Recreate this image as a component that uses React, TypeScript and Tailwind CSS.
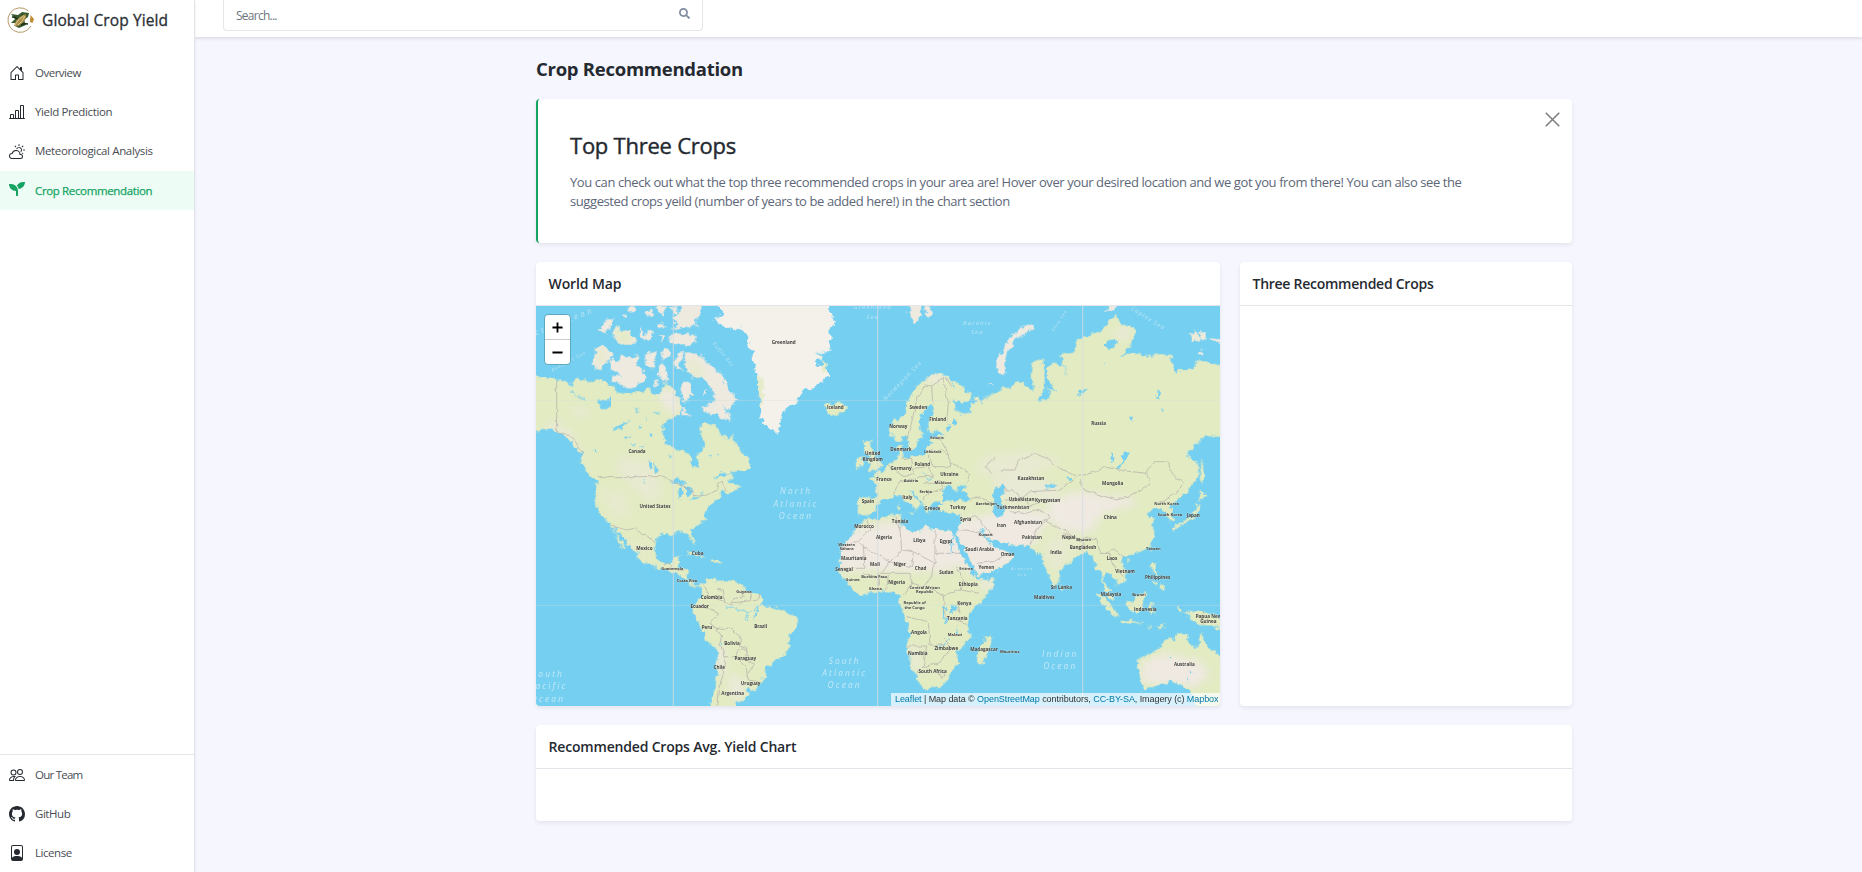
import React from "react";
import {
  BsHouseDoor,
  BsBarChartLine,
  BsCloudSun,
  BsPeople,
  BsGithub,
  BsFilePerson,
} from "react-icons/bs";
import { FaSeedling, FaSearch } from "react-icons/fa";

/* Coastlines, in map units (three per pixel). */
const AMERICAS =
  "M10 228 40 232 75 235 95 240 118 252 140 240 172 235 178 248 200 240 235 250 260 268 262 278 300 280 340 272 352 262 375 285 395 275 400 245 425 262 440 285 452 300 455 330 450 345 420 355 400 375 398 405 410 435 440 445 455 455 480 470 490 500 505 503 508 480 500 465 520 450 522 425 512 400 513 370 540 370 560 382 575 405 595 425 605 400 622 440 640 460 662 490 655 505 620 515 570 520 545 535 575 530 600 518 612 530 592 545 610 555 632 560 600 578 585 580 580 570 563 598 545 612 530 625 525 660 500 675 482 692 490 720 497 735 488 730 478 705 455 698 430 700 425 705 400 700 380 715 375 740 378 775 400 790 425 785 430 770 452 768 445 790 440 805 475 812 472 835 485 850 497 858 515 852 530 840 552 835 560 842 600 842 625 850 650 870 690 880 702 905 690 915 715 918 740 925 780 940 803 952 804 975 780 1005 778 1040 765 1070 735 1080 710 1100 705 1130 685 1160 665 1170 650 1160 655 1185 640 1203 620 1205 618 1240 545 1240 545 1190 555 1180 560 1130 565 1070 560 1045 530 1025 515 985 492 945 490 915 500 905 515 890 518 870 512 860 492 863 465 840 440 822 415 810 390 806 350 790 327 780 320 760 300 740 285 720 262 690 250 682 262 710 280 730 295 752 275 740 262 722 255 700 245 678 230 665 210 640 197 615 195 590 200 540 185 530 170 510 150 480 155 460 130 440 110 410 80 395 60 385 35 390 -10 402 -10 228Z";

const EURASIA =
  "M1080 375 1120 345 1130 310 1155 265 1180 240 1215 220 1250 225 1252 240 1290 250 1325 285 1320 303 1290 308 1268 300 1275 325 1300 345 1325 335 1320 318 1335 310 1332 290 1345 288 1350 305 1380 285 1400 270 1420 265 1445 262 1458 250 1455 240 1480 250 1500 268 1510 272 1512 250 1503 225 1510 190 1520 175 1540 180 1540 210 1545 250 1540 280 1520 302 1550 300 1560 285 1550 260 1580 280 1565 255 1550 230 1550 205 1570 190 1600 195 1610 235 1605 205 1595 175 1595 160 1635 155 1640 125 1660 108 1720 90 1735 65 1755 48 1770 60 1775 75 1800 75 1818 95 1810 120 1795 145 1770 175 1800 155 1820 160 1860 170 1890 160 1922 165 1925 190 1940 222 1955 205 1990 208 2000 180 2040 190 2110 202 2110 405 2020 410 2000 430 1970 465 1990 478 2005 490 2005 530 1990 555 1960 585 1935 605 1920 622 1927 640 1928 660 1915 665 1908 640 1890 628 1870 625 1850 645 1875 655 1866 672 1876 700 1865 730 1840 750 1800 765 1780 770 1770 782 1790 815 1785 840 1760 855 1758 840 1735 825 1724 815 1722 840 1735 865 1755 903 1738 895 1718 860 1715 815 1700 805 1685 770 1672 755 1650 765 1625 780 1590 810 1590 840 1575 858 1560 840 1540 790 1538 765 1520 765 1500 740 1460 735 1410 725 1385 718 1360 695 1350 680 1350 695 1375 725 1392 742 1418 750 1450 765 1435 790 1400 810 1340 830 1335 800 1310 760 1285 710 1280 695 1290 675 1290 645 1260 638 1230 635 1225 617 1240 608 1215 606 1205 612 1200 632 1190 640 1180 615 1165 598 1148 572 1138 572 1160 600 1178 620 1165 620 1158 635 1150 618 1120 600 1108 586 1085 592 1065 595 1045 610 1035 635 1015 648 983 640 985 590 1035 595 1040 580 1035 550 1015 535 1040 530 1035 515 1060 512 1075 495 1090 480 1105 470 1105 435 1120 435 1115 450 1120 475 1145 470 1190 462 1190 440 1210 430 1200 425 1205 408 1245 403 1235 397 1195 395 1192 370 1210 345 1215 320 1195 315 1180 335 1165 370 1170 390 1180 400 1165 420 1158 445 1140 450 1135 430 1130 405 1115 415 1095 425 1080 400Z";

const AFRICA =
  "M985 675 1010 655 1045 658 1085 645 1110 642 1115 655 1110 675 1130 690 1160 700 1180 680 1210 685 1250 695 1270 698 1280 730 1290 760 1310 790 1330 825 1340 838 1392 835 1385 865 1355 900 1320 935 1312 965 1320 1020 1280 1055 1285 1090 1265 1110 1255 1140 1230 1160 1180 1168 1168 1150 1145 1100 1128 1040 1140 1000 1130 960 1110 920 1110 890 1090 875 1070 870 1020 880 990 885 965 865 940 835 928 810 932 775 930 750 950 720 970 700Z M1380 1002 1387 1020 1360 1090 1345 1095 1342 1060 1355 1030Z";

const AUSTRALASIA =
  "M1825 1075 1875 1055 1910 1015 1935 1018 1940 1000 1975 1005 1970 1025 1995 1045 2005 1030 2015 992 2030 1040 2060 1060 2110 1095 2110 1250 2010 1250 1985 1178 1965 1165 1960 1155 1920 1145 1880 1160 1840 1170 1822 1100Z M1940 922 1962 922 1955 942 1985 932 2020 935 2110 965 2110 995 2045 978 2000 970 1980 950 1950 938Z M1788 910 1810 900 1840 875 1852 880 1840 910 1840 930 1820 935 1795 930Z M1695 878 1720 890 1750 925 1768 950 1755 952 1720 915Z M1768 958 1820 965 1845 972 1780 970Z M1852 915 1880 908 1862 920 1880 950 1865 935 1858 950Z M1865 790 1878 790 1875 815 1885 832 1870 822 1862 805Z M1890 860 1905 852 1902 875 1885 868Z M1870 838 1880 845 1885 855 1872 848Z M1850 978 1865 976 1860 984Z M1880 978 1910 972 1890 985Z M1865 738 1868 758 1860 750Z M1790 780 1800 778 1794 788Z M1590 855 1600 862 1594 875Z";

const ISLES =
  "M2008 608 2005 640 1980 662 1950 678 1935 690 1930 680 1965 660 1990 645 1995 620Z M2010 568 2030 590 2005 600Z M2015 475 2025 520 2015 555 2010 520Z M1000 425 1025 420 1020 440 1045 480 1055 495 1040 510 1008 515 1025 500 1010 490 1020 470 1005 450Z M980 475 1000 468 998 500 975 502Z M880 315 895 308 905 318 930 305 945 315 947 330 925 348 905 345 890 335 895 325Z M1115 465 1122 468 1116 474Z M468 757 485 754 510 765 530 775 500 768Z M548 778 580 784 565 790 545 787Z M1132 634 1152 636 1145 644Z M1105 612 1112 612 1110 628 1104 626Z";

const GREENLAND =
  "M548 -10 580 45 550 60 570 75 610 88 635 85 650 110 665 150 670 190 680 225 695 235 690 290 690 330 700 370 715 385 730 390 745 402 750 370 760 340 775 318 795 308 815 285 820 270 850 265 880 240 894 227 894 205 865 200 855 185 880 170 855 160 885 155 905 150 898 130 903 110 895 100 900 85 918 75 915 60 897 40 900 -10Z";

const ARCTIC =
  "M200 140 225 138 252 165 240 175 225 190 208 212 188 190Z M235 185 250 178 265 185 275 165 295 175 325 165 320 200 340 215 350 235 330 250 320 262 290 265 265 250 250 245 245 230 270 225 245 205Z M345 165 380 150 378 180 365 208 348 190Z M465 155 515 165 530 190 555 205 580 235 590 265 622 297 605 315 600 330 575 320 600 345 600 365 560 345 520 335 515 320 540 315 560 300 545 265 525 240 515 230 490 235 470 215 465 195Z M395 150 425 150 420 170 400 182Z M385 205 400 190 412 220 415 245 388 238Z M450 153 462 158 445 200 458 212 434 202 436 170Z M455 320 490 350 462 342Z M462 240 482 250 485 285 465 308 452 280Z M420 90 440 80 430 55 450 40 455 10 512 10 510 45 495 60 505 78 460 82Z M415 105 440 100 495 105 500 125 475 135 420 130Z M207 92 228 60 252 52 240 80 225 100Z M242 102 268 75 275 95 300 88 305 110 322 115 312 135 270 132Z M330 80 345 105 360 90 372 110 345 120 330 105Z M290 22 310 18 318 35 300 38Z M270 45 290 42 288 52Z M345 35 365 25 372 48 352 52Z M382 70 402 68 405 85 385 82Z M385 110 402 108 400 125Z M378 18 410 20 400 50 390 40Z M420 18 440 18 445 45 425 40Z M370 240 385 245 380 260Z M518 268 530 268 526 285Z M1510 70 1510 85 1455 120 1430 160 1425 195 1430 220 1410 222 1395 190 1420 150 1440 110 1470 85Z M1133 10 1170 10 1175 40 1155 75 1140 50Z M1190 10 1208 40 1195 55 1185 35Z M1728 35 1740 10 1765 10 1755 28Z M1980 100 1998 92 2010 120 1990 128Z M2008 96 2030 100 2026 118 2012 122Z M2005 155 2015 150 2020 165 2008 165Z M2040 115 2080 118 2080 130 2050 124Z M1375 250 1385 248 1386 260Z";

const LAKES =
  "M200 305 240 295 240 325 215 328 205 318Z M248 385 300 360 280 380 255 388Z M355 480 365 490 370 515 358 500Z M370 480 385 515 378 518Z M282 412 305 408 290 418Z M345 430 338 445 330 448Z M355 402 368 400 366 412Z M420 543 445 535 470 545 465 552 440 553 425 550Z M448 560 455 555 458 590 448 600 445 580Z M465 555 490 570 480 590 465 572Z M480 600 500 590 510 590 490 602Z M505 585 525 578 515 585Z M1398 560 1418 552 1426 575 1410 590 1414 610 1426 622 1414 650 1398 655 1385 635 1394 610 1390 585Z M1238 568 1255 560 1280 572 1285 560 1310 552 1295 572 1318 590 1316 602 1280 602 1240 605Z M1755 502 1775 492 1782 455 1796 455 1788 480 1768 505Z M1740 455 1746 455 1752 485 1746 485Z M1728 122 1755 120 1760 135 1735 148 1728 138Z M1640 272 1675 268 1648 284Z M1886 270 1892 268 1888 300 1884 290Z M1893 318 1902 332 1896 332Z M1795 350 1812 350 1806 370Z M1720 185 1728 188 1724 192Z M1250 375 1262 378 1258 398 1250 392Z M1270 358 1280 364 1276 378 1268 370Z M1265 248 1270 252 1266 262Z M1540 558 1580 552 1582 560 1545 566Z M1615 530 1622 540 1612 542Z M1260 920 1268 912 1280 918 1275 935 1262 935Z M1243 920 1248 925 1244 950 1252 970 1246 975 1240 945Z M1280 980 1284 1000 1278 1010Z M555 838 560 845 556 852Z M568 1022 578 1028 572 1034Z M1858 768 1868 775 1862 780Z M1978 1115 1984 1115 1982 1125Z M1970 1138 1976 1136 1978 1150Z M1922 1070 1928 1070 1925 1075Z M310 325 330 332 318 335Z M345 350 352 352 350 362Z M325 380 338 376 330 390Z M160 310 178 318 170 315Z M365 335 395 340 380 343Z M305 435 318 430 312 440Z M415 465 425 463 420 472Z M535 470 545 468 540 476Z M190 445 205 458 198 460Z M340 540 350 545 345 548Z M560 460 568 458 564 468Z";

const BORDERS =
  "M80 245V395 M80 395 110 402 130 415 158 460 M203 530H395 L420 540 440 550 485 570 490 590 530 585 560 570 565 550 580 548 588 575 M245 678 290 690 315 685 335 705 350 702 375 732 M400 795 415 790 425 797 M440 812 470 808 M520 850 540 890 585 905 580 870 558 868 M585 905 605 912 612 895 640 890 635 870 M660 878 662 900 M690 880 685 900 610 908 M500 918 535 925 565 940 540 970 560 985 600 985 630 1010 632 1040 650 1045 652 1080 675 1090 650 1125 655 1140 685 1145 M560 985 575 1010 570 1030 585 1070 615 1070 625 1050 650 1050 M585 1070 580 1120 565 1170 560 1218 M615 1070 650 1100 650 1120 M1130 420 1150 345 1160 300 1185 255 1205 258 1208 310 M1205 258 1240 235 1255 310 1250 370 M1250 235 1265 260 M1115 475 1145 475 1150 520 1125 530 1090 510 1075 495 M1150 505 1195 500 1210 530 1170 530 1110 545 1090 580 M1195 465 1210 500 1240 500 1262 500 1258 470 1235 450 1190 455 M1210 410 1232 420 1260 470 M1262 490 1290 500 1320 525 1310 545 M1180 550 1230 545 1240 565 1195 580 1180 600 M1385 520 1365 500 1395 470 M1320 600 1350 590 1380 610 M1410 510 1455 510 1465 480 1515 460 1560 480 1590 505 1640 530 1590 570 1500 575 1470 600 1425 600 M1640 530 1700 515 1720 500 1780 512 1850 520 1860 550 1800 590 1760 600 1660 570 1650 540 M1850 520 1870 485 1910 485 1935 535 1960 545 1940 580 1890 610 M1425 570 1450 570 1500 620 1540 600 1590 600 M1440 635 1480 640 1530 630 1560 650 1520 690 1500 735 M1540 660 1580 680 1640 715 1700 715 1710 760 1740 760 1745 790 1780 830 M1600 700 1660 725 1665 750 M1730 760 1750 745 1780 770 M1290 660 1340 650 1380 700 M1288 690 1310 690 1350 700 M1340 790 1390 785 1420 770 M1010 660 1020 690 980 725 930 745 M985 725 1000 740 1080 785 1115 750 1110 690 1095 650 M1000 740 1005 805 935 805 M1115 750 1150 755 1215 790 1215 690 M1215 760H1290 M1150 755 1145 800 1080 785 1055 820 M1055 820 1140 820 1145 850 1180 860 1205 830 1210 790 M1075 825 1070 870 M1045 820 1045 875 M1000 820 1040 830 M1145 850 1120 885 M1180 860 1240 885 1290 870 1300 840 1280 800 M1240 885 1245 950 1310 970 M1130 950 1195 965 1200 1035 1240 1035 M1130 1038H1190 L1180 1100 1225 1090 1260 1050 1245 1010 M1290 870 1350 880 M1180 1100 1160 1120 M1225 1120 1240 1115 1245 1130 1230 1135Z M1285 910 1290 940 M2020 935V975";

const RIVERS =
  "M585 918 620 925 655 938 690 920 M655 938 645 962 M690 918 672 955 M120 275 165 300 M180 620 200 640 M1205 540 1180 520 M1230 1040 1260 1020 M1275 660 1262 762";

type Label = [string, number, number, number?];
const COUNTRIES: Label[] = [
  ["Greenland", 761, 131], ["Canada", 321, 459], ["United States", 375, 624], ["Iceland", 916, 328],
  ["Sweden", 1165, 328], ["Finland", 1223, 362], ["Norway", 1105, 384], ["Estonia", 1221, 418, 11],
  ["Denmark", 1113, 454], ["Lithuania", 1208, 460, 11], ["United", 1028, 466], ["Kingdom", 1028, 482],
  ["Germany", 1113, 510], ["Poland", 1177, 498], ["Ukraine", 1258, 529], ["France", 1062, 544],
  ["Austria", 1143, 547, 12], ["Moldova", 1239, 551, 12], ["Serbia", 1187, 580, 12], ["Italy", 1132, 597],
  ["Spain", 1014, 608], ["Greece", 1207, 631], ["Turkey", 1284, 627], ["Azerbaijan", 1369, 616, 12],
  ["Russia", 1706, 374], ["Kazakhstan", 1503, 541], ["Mongolia", 1748, 555], ["Uzbekistan", 1475, 603],
  ["Kyrgyzstan", 1553, 607], ["Turkmenistan", 1449, 627], ["North Korea", 1910, 616, 12],
  ["South Korea", 1920, 649, 12], ["Japan", 1990, 650], ["China", 1741, 658], ["Afghanistan", 1494, 672],
  ["Pakistan", 1506, 717], ["Nepal", 1616, 716], ["Bhutan", 1661, 723, 12], ["Bangladesh", 1659, 746],
  ["India", 1578, 762], ["Laos", 1746, 779], ["Taiwan", 1870, 751, 12], ["Vietnam", 1785, 818],
  ["Philippines", 1883, 837], ["Sri Lanka", 1594, 866], ["Maldives", 1543, 896], ["Malaysia", 1743, 887],
  ["Brunei", 1827, 887, 12], ["Indonesia", 1846, 933], ["Papua New", 2036, 953], ["Guinea", 2035, 969],
  ["Australia", 1963, 1099], ["Mauritius", 1439, 1059, 12], ["Madagascar", 1362, 1053], ["Syria", 1307, 662],
  ["Iran", 1414, 682], ["Kuwait", 1367, 708, 12], ["Saudi Arabia", 1349, 753], ["Oman", 1433, 767],
  ["Yemen", 1369, 807], ["Eritrea", 1308, 809, 12], ["Tunisia", 1110, 669], ["Morocco", 1002, 684],
  ["Algeria", 1062, 717], ["Libya", 1168, 726], ["Egypt", 1248, 730], ["Western", 950, 737, 12],
  ["Sahara", 950, 750, 12], ["Mauritania", 971, 780], ["Mali", 1035, 797], ["Niger", 1109, 797],
  ["Chad", 1172, 811], ["Sudan", 1249, 821], ["Senegal", 942, 813], ["Guinea", 968, 843, 12],
  ["Burkina Faso", 1033, 834, 12], ["Ghana", 1036, 870, 12], ["Nigeria", 1100, 851], ["Central African", 1184, 866, 12],
  ["Republic", 1184, 879, 12], ["Ethiopia", 1315, 859], ["Republic of", 1154, 913, 12], ["the Congo", 1154, 926, 12],
  ["Kenya", 1303, 915], ["Tanzania", 1282, 960], ["Angola", 1167, 1001], ["Malawi", 1275, 1009, 12],
  ["Zimbabwe", 1249, 1051], ["Namibia", 1163, 1065], ["South Africa", 1208, 1120], ["Mexico", 343, 749],
  ["Cuba", 503, 765], ["Guatemala", 427, 810, 12], ["Costa Rica", 471, 847, 12], ["Guyana", 642, 880, 12],
  ["Colombia", 545, 897], ["Ecuador", 509, 925], ["Peru", 531, 986], ["Brazil", 692, 983], ["Bolivia", 606, 1035],
  ["Paraguay", 646, 1081], ["Chile", 568, 1107], ["Uruguay", 662, 1155], ["Argentina", 608, 1184],
];

const OCEANS: Label[] = [
  ["North", 798, 583, 25], ["Atlantic", 798, 620, 25], ["Ocean", 798, 658, 25],
  ["South", 944, 1091, 25], ["Atlantic", 944, 1128, 25], ["Ocean", 944, 1165, 25],
  ["Indian", 1591, 1070, 25], ["Ocean", 1591, 1107, 25],
  ["South", 54, 1130, 25], ["Pacific", 54, 1168, 25], ["Ocean", 54, 1206, 25],
];

const SEAS: Label[] = [
  ["Greenland", 1028, 28, 18], ["Sea", 1028, 56, 18], ["Barents", 1342, 74, 18], ["Sea", 1342, 102, 18],
  ["Arabian", 1477, 811, 12], ["Sea", 1477, 829, 12],
];

const LANDS = [AMERICAS, EURASIA, AFRICA, AUSTRALASIA, ISLES, ARCTIC, GREENLAND];

function WorldMap() {
  return (
    <svg viewBox="18 18 2052 1200" className="block h-[400px] w-[684px]" role="img" aria-label="World map">
      <defs>
        <filter id="soft" x="-20%" y="-20%" width="140%" height="140%">
          <feGaussianBlur stdDeviation="12" />
        </filter>
        <filter id="coast" x="-60" y="-60" width="2260" height="1400" filterUnits="userSpaceOnUse" primitiveUnits="userSpaceOnUse">
          <feTurbulence type="fractalNoise" baseFrequency="0.06" numOctaves="3" seed="7" result="n" />
          <feDisplacementMap in="SourceGraphic" in2="n" scale="22" xChannelSelector="R" yChannelSelector="G" />
        </filter>
        <filter id="lines" x="-60" y="-60" width="2260" height="1400" filterUnits="userSpaceOnUse" primitiveUnits="userSpaceOnUse">
          <feTurbulence type="fractalNoise" baseFrequency="0.05" numOctaves="2" seed="7" result="n" />
          <feDisplacementMap in="SourceGraphic" in2="n" scale="12" xChannelSelector="R" yChannelSelector="G" />
        </filter>
        <clipPath id="land">
          {LANDS.map((d, i) => (
            <path key={i} d={d} />
          ))}
        </clipPath>
      </defs>
      <rect x="0" y="0" width="2100" height="1240" fill="#75cff0" />
      <g filter="url(#coast)">
        <g fill="#e2ebc2">
          <path d={AMERICAS} />
          <path d={EURASIA} />
          <path d={AFRICA} />
          <path d={AUSTRALASIA} />
          <path d={ISLES} />
        </g>
        <path d={ARCTIC} fill="#efeae0" />
        <g clipPath="url(#land)">
          <g filter="url(#soft)" fill="#efe9e2">
            <path d="M900 700 1000 680 1120 660 1280 680 1340 820 1280 800 1240 815 920 812Z" />
            <path d="M1270 660 1350 650 1440 620 1560 640 1520 720 1440 800 1340 830Z" />
            <path d="M1560 600 1650 575 1800 595 1830 610 1720 640 1680 700 1600 695 1550 650Z" />
            <path d="M1380 535 1460 520 1600 560 1560 600 1420 600Z" opacity="0.6" />
            <path d="M1830 1090 1900 1060 2010 1080 2040 1130 1990 1160 1840 1150Z" />
            <path d="M380 265 440 270 450 340 410 330Z" />
            <path d="M590 1120 650 1140 640 1200 600 1190Z" opacity="0.7" />
            <path d="M560 1040 585 1050 580 1120 562 1120Z" />
            <path d="M130 320 180 330 170 350 130 345Z" opacity="0.7" />
            <path d="M260 470 350 480 400 560 370 620 260 520Z" opacity="0.5" />
            <path d="M210 560 290 580 300 660 240 640Z" opacity="0.4" />
            <path d="M1360 470 1480 450 1600 480 1500 530 1330 520Z" opacity="0.5" />
            <path d="M60 360 120 385 170 500 130 440 50 385Z" opacity="0.6" />
            <path d="M1750 90 1800 80 1800 110 1760 125Z" opacity="0.7" />
            <path d="M1135 1040 1165 1045 1175 1110 1150 1110Z" opacity="0.7" />
            <path d="M1350 840 1395 835 1370 880Z" />
            <path d="M1560 700 1640 730 1580 830 1540 760Z" opacity="0.45" />
            <path d="M1190 220 1260 225 1240 240 1190 250Z" />
            <path d="M290 720 350 735 350 780 310 740Z" opacity="0.4" />
          </g>
          <g filter="url(#soft)" fill="#e2ebc2">
            <path d="M470 170 500 190 530 240 490 220Z" />
            <path d="M200 150 225 150 225 180 205 200Z" />
            <path d="M250 80 300 90 310 130 260 130Z" />
            <path d="M1985 95 2000 95 2000 125 1985 125Z" />
          </g>
        </g>
        <path d={GREENLAND} fill="#f4f1eb" />
        <path d="M680 225 700 235 702 290 690 320 688 280Z M870 165 892 205 885 225 876 200Z" fill="#e6ecc9" />
        <path d={LAKES} fill="#75cff0" />
        <path d={RIVERS} fill="none" stroke="#75cff0" strokeWidth="3" />
      </g>
      <path d={BORDERS} filter="url(#lines)" fill="none" stroke="#b3adaa" strokeOpacity="0.8" strokeWidth="2.6" strokeLinejoin="round" />
      <g fill="none">
        <path d="M430 0V1240M1043 0V1240M1658 0V1240" stroke="#d5dde0" strokeOpacity="0.75" strokeWidth="3.4" />
        <path d="M0 301H2100M0 916H2100" stroke="#d5dde0" strokeOpacity="0.35" strokeWidth="3" />
      </g>
      <g className="font-['Open_Sans',sans-serif] italic" fill="#c3e9f8" textAnchor="middle">
        {OCEANS.map(([t, x, y, s], i) => (
          <text key={i} x={x} y={y} fontSize={s} letterSpacing="6.5">{t}</text>
        ))}
        {SEAS.map(([t, x, y, s], i) => (
          <text key={i} x={x} y={y} fontSize={s} letterSpacing="3.5" fillOpacity="0.85">{t}</text>
        ))}
        <g fontSize="18" letterSpacing="3" fillOpacity="0.85">
          <text transform="translate(1122 246) rotate(-46)">Norwegian Sea</text>
          <text transform="translate(1852 60) rotate(32)">Laptev Sea</text>
          <text transform="translate(1592 64) rotate(-56)" fontSize="13">Kara Sea</text>
          <text transform="translate(577 166) rotate(50)" fontSize="14">Baffin Bay</text>
          <text transform="translate(118 188) rotate(-28)" fontSize="14">Beaufort Sea</text>
          <text transform="translate(88 78) rotate(-22)" fontSize="24" letterSpacing="8">Arctic Ocean</text>
        </g>
      </g>
      <g
        className="font-['Open_Sans',sans-serif] font-bold"
        fill="#3f3f3f"
        stroke="#f3f2e4"
        strokeWidth="2"
        strokeOpacity="0.45"
        paintOrder="stroke"
        textAnchor="middle"
      >
        {COUNTRIES.map(([t, x, y, s], i) => (
          <text key={i} x={x} y={y} fontSize={s ?? 13.8}>{t}</text>
        ))}
      </g>
    </svg>
  );
}

function Logo() {
  return (
    <svg viewBox="0 0 28 28" className="h-7 w-7 shrink-0">
      <path d="M22.5 5A12.3 12.3 0 1 0 25 20" fill="none" stroke="#b59a6a" strokeWidth="1" />
      <path d="M5 8 12 9 16 6 23 7 22 11 18 14 20 19 13 22 9 20 11 17 5 17 9 13Z" fill="#3c5a2c" />
      <path d="M8 20Q10 11 20 8Q21 16 12 20Z" fill="#a98f4c" />
      <path d="M9 19Q12 13 18 9.500M12 19Q17 15 19 10" fill="none" stroke="#e2c987" strokeWidth="1" />
      <path d="M6 11Q9 11 12 13M15 19Q18 17 22 18" fill="none" stroke="#1f331b" strokeWidth="1.500" />
      <path d="M24.500 9 28 13 26.500 17 24 16Z" fill="#c08a2e" />
    </svg>
  );
}

type NavProps = { icon: React.ReactNode; label: string; active?: boolean; className?: string };

function NavItem({ icon, label, active, className = "" }: NavProps) {
  return (
    <a
      className={
        "flex h-[39px] items-center gap-[10px] pl-[9px] text-[11.500px] " +
        (active ? "bg-[#edfdf6] text-[#15a362] [-webkit-text-stroke:0.25px] " : "text-[#484d54] ") +
        className
      }
    >
      <span className={"text-[16px] [-webkit-text-stroke:0] " + (active ? "-mt-1 text-[#15a362]" : "text-[#252930]")}>{icon}</span>
      <span className="whitespace-nowrap">{label}</span>
    </a>
  );
}

function Card({ title, tracking, className = "", children }: { title: string; tracking: string; className?: string; children?: React.ReactNode }) {
  return (
    <section className={"overflow-hidden rounded-[4px] bg-white shadow-[0_2px_4px_rgba(0,0,0,0.08)] " + className}>
      <h4 className={"flex h-11 items-center whitespace-nowrap border-b border-[#e4e5ea] pl-[12.500px] text-[14px] font-semibold text-[#252930] " + tracking}>
        {title}
      </h4>
      {children}
    </section>
  );
}

export default function App() {
  return (
    <div className="flex h-[872px] w-full overflow-hidden bg-[#f5f6fe] font-['Open_Sans','Noto_Sans',sans-serif]">
      <aside className="z-10 flex w-[195px] shrink-0 flex-col border-r border-[#e1e3e8] bg-white shadow-[0_2px_4px_rgba(0,0,0,0.06)]">
        <div className="flex h-[54px] items-start gap-[8px] pl-[6px] pt-[6px]">
          <Logo />
          <span className="whitespace-nowrap text-[15.500px] leading-[28px] tracking-[0.120px] text-[#2b2f36] [-webkit-text-stroke:0.3px]">Global Crop Yield</span>
        </div>
        <nav>
          <NavItem icon={<BsHouseDoor />} label="Overview" className="pb-[2px] tracking-[-0.5px]" />
          <NavItem icon={<BsBarChartLine />} label="Yield Prediction" className="pb-[2px] tracking-[-0.38px]" />
          <NavItem icon={<BsCloudSun />} label="Meteorological Analysis" className="pb-[2px] tracking-[-0.36px]" />
          <NavItem icon={<FaSeedling />} label="Crop Recommendation" active className="tracking-[-0.36px]" />
        </nav>
        <div className="mt-auto border-t border-[#e4e5ea]">
          <NavItem icon={<BsPeople />} label="Our Team" className="tracking-[-0.75px]" />
          <NavItem icon={<BsGithub />} label="GitHub" className="tracking-[-0.45px]" />
          <NavItem icon={<BsFilePerson />} label="License" className="tracking-[-0.45px]" />
        </div>
      </aside>

      <div className="flex min-w-0 flex-1 flex-col">
        <header className="h-[37px] shrink-0 bg-white pl-7 shadow-[0_2px_3px_rgba(0,0,0,0.1)]">
          <div className="flex h-[31px] w-[480px] items-center justify-between rounded-b-[4px] border border-t-0 border-[#e4e6ea] pl-[12px] pr-[12px]">
            <span className="mt-[2px] text-[12px] tracking-[-0.75px] text-[#6c757d]">Search...</span>
            <FaSearch className="mb-1 h-[11px] w-[11px] text-[#828d9f]" />
          </div>
        </header>

        <main className="ml-[341px] w-[1036px]">
          <h1 className="mt-[18px] h-[44px] whitespace-nowrap text-[18.500px] font-bold leading-[27px] tracking-[-0.260px] text-[#252930]">Crop Recommendation</h1>

          <section className="flex h-[144px] items-start justify-between rounded-[4px] border-l-2 border-[#15a362] bg-white shadow-[0_2px_4px_rgba(0,0,0,0.08)]">
            <div className="pl-8 pt-[29px]">
              <h3 className="whitespace-nowrap text-[22px] leading-[34px] tracking-[-0.240px] text-[#252930] [-webkit-text-stroke:0.4px]">Top Three Crops</h3>
              <p className="mt-[11px] whitespace-nowrap text-[13px] leading-[19px] tracking-[-0.410px] text-[#5d6778]">
                You can check out what the top three recommended crops in your area are! Hover over your desired location and we got you from there! You can also see the
                <br />
                suggested crops yeild (number of years to be added here!) in the chart section
              </p>
            </div>
            <svg viewBox="0 0 14 14" className="mr-[12px] mt-[13px] h-[15px] w-[15px]">
              <path d="M.7.7 13.300 13.300M13.300.7.7 13.300" stroke="#808080" strokeWidth="1.500" fill="none" />
            </svg>
          </section>

          <div className="mt-[19px] flex gap-5">
            <Card title="World Map" tracking="tracking-[-0.1px]" className="w-[684px]">
              <div className="relative h-[400px]">
                <WorldMap />
                <div className="absolute left-[8px] top-[8px] flex w-[27px] flex-col overflow-hidden rounded-[4px] border-[1.500px] border-[#5fa6c0] bg-white">
                  <button className="flex h-[25px] items-center justify-center border-b border-[#ccc]">
                    <svg viewBox="0 0 12 12" className="h-[11px] w-[11px]"><path d="M6 .5V11.500M.5 6H11.500" stroke="#000" strokeWidth="2" /></svg>
                  </button>
                  <button className="flex h-6 items-center justify-center">
                    <svg viewBox="0 0 12 12" className="h-[11px] w-[11px]"><path d="M.5 6H11.500" stroke="#000" strokeWidth="2" /></svg>
                  </button>
                </div>
                <div className="absolute bottom-0 right-0 h-[13px] w-[329px] whitespace-nowrap bg-white/70 pl-1 font-['Liberation_Sans',sans-serif] text-[9px] leading-[12px] tracking-[-0.070px] text-[#333]">
                  <a className="text-[#0078a8]">Leaflet</a> | Map data © <a className="text-[#0078a8]">OpenStreetMap</a> contributors, <a className="text-[#0078a8]">CC-BY-SA</a>, Imagery (c) <a className="text-[#0078a8]">Mapbox</a>
                </div>
              </div>
            </Card>
            <Card title="Three Recommended Crops" tracking="tracking-[-0.260px]" className="w-[332px]" />
          </div>

          <Card title="Recommended Crops Avg. Yield Chart" tracking="tracking-[-0.180px]" className="mt-[19px] h-[96px]" />
        </main>
      </div>
    </div>
  );
}
